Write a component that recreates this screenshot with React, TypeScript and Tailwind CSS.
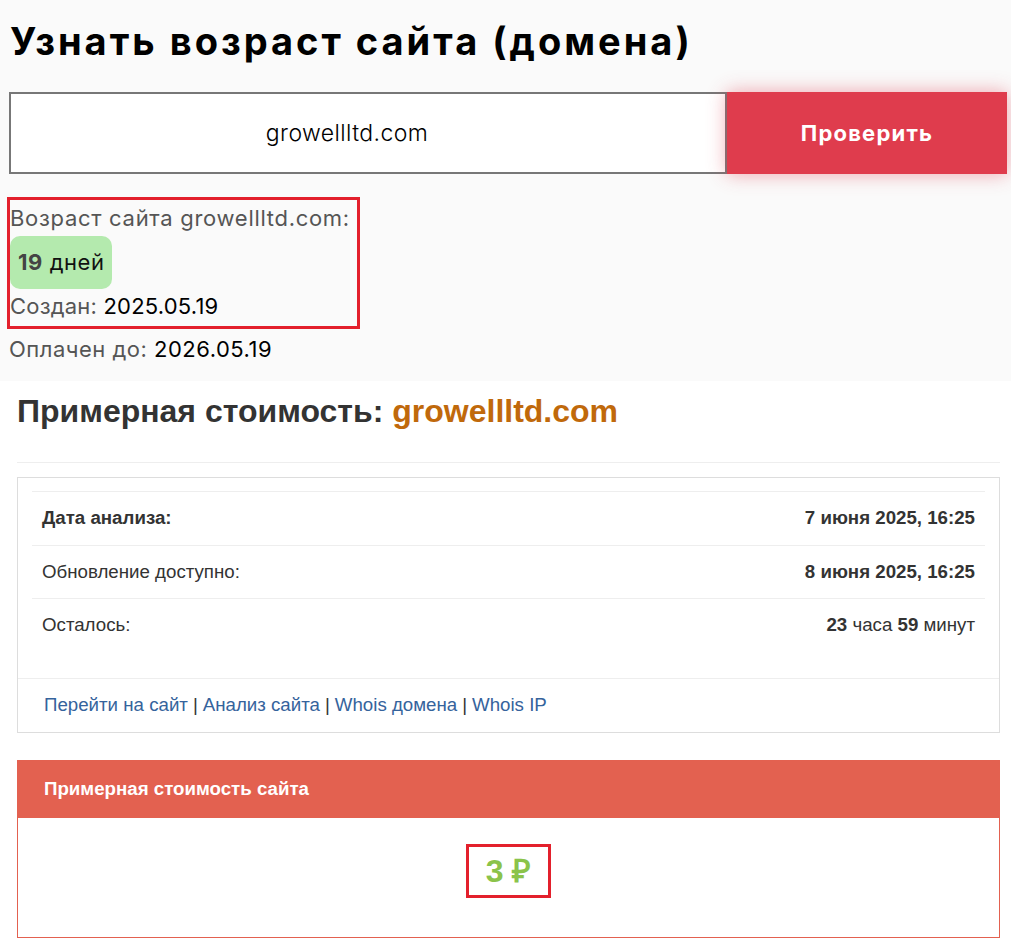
export default function App() {
  const domain = 'growellltd.com'

  return (
    <div className="min-h-screen bg-white">
      <section className="bg-[#fafafa] pl-[9px] pr-[4px] pt-[16px] pb-[12px] font-['Inter',sans-serif]">
        <h1 className="text-[38px] font-bold leading-[50px] tracking-[3px] text-black pl-px">Узнать возраст сайта (домена)</h1>

        <form className="mt-[26px] flex h-[82px]" onSubmit={(e) => e.preventDefault()}>
          <input
            className="flex-1 min-w-0 border-2 border-[#777] bg-white pr-[42px] text-center text-[23px] font-light tracking-[0.4px] text-black outline-none"
            defaultValue={domain}
          />
          <button
            type="submit"
            className="w-[280px] bg-[#df3c4d] text-[22px] font-bold tracking-[1.2px] text-white shadow-[0_0_18px_rgba(223,60,77,0.45)]"
          >
            Проверить
          </button>
        </form>

        <div className="mt-[23px] -ml-[2px] inline-block w-[353px] border-[3px] border-[#e3202c] pb-[3px]">
          <div className="text-[22px] leading-[36px] tracking-[0.7px] text-[#555]">Возраст сайта {domain}:</div>
          <div className="inline-flex h-[53px] items-center rounded-[10px] bg-[#b4eaae] px-[8px] text-[22px] tracking-[0.5px]">
            <span className="font-bold text-[#444]">19</span>
            <span className="ml-[7px] text-[#111]">дней</span>
          </div>
          <div className="text-[22px] leading-[34px] tracking-[0.2px] text-[#555]">
            Создан: <span className="text-black">2025.05.19</span>
          </div>
        </div>
        <div className="text-[22px] leading-[40px] tracking-[0.5px] text-[#555]">
          Оплачен до: <span className="text-black">2026.05.19</span>
        </div>
      </section>

      <section className="px-[17px] pr-[11px] font-['Liberation_Sans',Arial,sans-serif]">
        <h2 className="pt-[11px] text-[32px] font-bold leading-[38px] text-[#333]">
          Примерная стоимость: <span className="text-[#c0690b]">{domain}</span>
        </h2>
        <hr className="mt-[32px] border-t border-[#eee]" />

        <div className="mt-[14px] border border-[#ddd] bg-white">
          <div className="px-[14px] pt-[13px] pb-[27px]">
            <div className="flex h-[54px] items-center justify-between border-t border-[#eee] px-[10px] text-[18.7px] text-[#333]">
              <span className="font-bold">Дата анализа:</span>
              <span className="font-bold">7 июня 2025, 16:25</span>
            </div>
            <div className="flex h-[53px] items-center justify-between border-t border-[#eee] px-[10px] text-[18.7px] text-[#333]">
              <span>Обновление доступно:</span>
              <span className="font-bold">8 июня 2025, 16:25</span>
            </div>
            <div className="flex h-[53px] items-center justify-between border-t border-[#eee] px-[10px] text-[18.7px] text-[#333]">
              <span>Осталось:</span>
              <span>
                <b>23</b> часа <b>59</b> минут
              </span>
            </div>
          </div>
          <div className="flex h-[54px] items-center border-t border-[#eee] px-[26px] text-[18.7px] text-[#333]">
            <a className="text-[#35639c]" href="#">Перейти на сайт</a>
            <span className="mx-[5px]">|</span>
            <a className="text-[#35639c]" href="#">Анализ сайта</a>
            <span className="mx-[5px]">|</span>
            <a className="text-[#35639c]" href="#">Whois домена</a>
            <span className="mx-[5px]">|</span>
            <a className="text-[#35639c]" href="#">Whois IP</a>
          </div>
        </div>

        <div className="mt-[27px] border border-[#e36150] bg-white">
          <div className="flex h-[57px] items-center bg-[#e36150] px-[26px] text-[18.7px] font-bold text-white">
            Примерная стоимость сайта
          </div>
          <div className="flex h-[119px] items-center justify-center pb-[14px]">
            <div className="border-[3px] border-[#e3202c] px-[17px] py-[7px] text-[32px] font-bold leading-[34px] text-[#8bc34a]">
              3 ₽
            </div>
          </div>
        </div>
      </section>
    </div>
  )
}
